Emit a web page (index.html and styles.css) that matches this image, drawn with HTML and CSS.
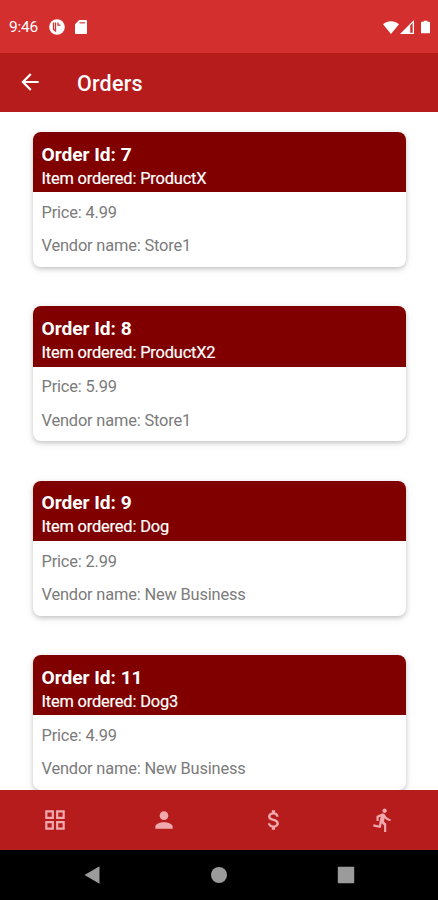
FILE: index.html
```html
<!DOCTYPE html>
<html lang="en">
<head>
<meta charset="utf-8">
<title>Orders</title>
<link rel="stylesheet" href="styles.css">
</head>
<body>
<div class="screen">
  <div class="status">
    <span class="clock">9:46</span>
    <svg class="app-dot" viewBox="0 0 16 16"><circle cx="8" cy="8" r="7.800" fill="#fff"/><path d="M4.500 3.500v7l2 1.500V3.500M9 3.500v2.700h2.500" fill="none" stroke="#d32f2f" stroke-width="1.300"/></svg>
    <svg class="sd" viewBox="0 0 12 14"><path d="M4.200 0H11a1 1 0 0 1 1 1v12a1 1 0 0 1-1 1H1a1 1 0 0 1-1-1V4.200z" fill="#fff"/><path d="M4.500 2.800h5.500" stroke="#d32f2f" stroke-width="1.500" opacity=".75"/></svg>
    <div class="signals">
      <svg class="wifi" viewBox="0 0 16 13"><path d="M0 3.200C4.500-.9 11.500-.9 16 3.200L8 13z" fill="#fff"/></svg>
      <svg class="cell" viewBox="0 0 14 14"><path d="M0 14L14 0v14z" fill="#fff"/><path d="M10.200 5.500L12.700 3v9.700h-2.500z" fill="#d32f2f"/></svg>
      <svg class="battery" viewBox="0 0 10 14"><path d="M3 0h4v1.300h2a1 1 0 0 1 1 1V13a1 1 0 0 1-1 1H1a1 1 0 0 1-1-1V2.300a1 1 0 0 1 1-1h2z" fill="#fff"/></svg>
    </div>
  </div>
  <header class="appbar">
    <svg class="back" viewBox="0 0 24 24"><path d="M20 11H7.830l5.590-5.590L12 4l-8 8 8 8 1.410-1.410L7.830 13H20z"/></svg>
    <h1>Orders</h1>
  </header>
  <main class="orders">
    <article class="card">
      <div class="card-head"><h2>Order Id: 7</h2><p>Item ordered: ProductX</p></div>
      <div class="card-body"><p>Price: 4.99</p><p>Vendor name: Store1</p></div>
    </article>
    <article class="card">
      <div class="card-head"><h2>Order Id: 8</h2><p>Item ordered: ProductX2</p></div>
      <div class="card-body"><p>Price: 5.99</p><p>Vendor name: Store1</p></div>
    </article>
    <article class="card">
      <div class="card-head"><h2>Order Id: 9</h2><p>Item ordered: Dog</p></div>
      <div class="card-body"><p>Price: 2.99</p><p>Vendor name: New Business</p></div>
    </article>
    <article class="card">
      <div class="card-head"><h2>Order Id: 11</h2><p>Item ordered: Dog3</p></div>
      <div class="card-body"><p>Price: 4.99</p><p>Vendor name: New Business</p></div>
    </article>
  </main>
  <nav class="tabs">
    <svg viewBox="0 0 24 24"><path fill-rule="evenodd" d="M3 3v8h8V3H3zm6 6H5V5h4v4zm-6 4v8h8v-8H3zm6 6H5v-4h4v4zm4-16v8h8V3h-8zm6 6h-4V5h4v4zm-6 4v8h8v-8h-8zm6 6h-4v-4h4v4z"/></svg>
    <svg viewBox="0 0 24 24"><path d="M12 12c2.210 0 4-1.790 4-4s-1.790-4-4-4-4 1.790-4 4 1.790 4 4 4zm0 2c-2.670 0-8 1.340-8 4v2h16v-2c0-2.660-5.330-4-8-4z"/></svg>
    <svg viewBox="0 0 24 24"><path d="M11.800 10.900c-2.270-.59-3-1.200-3-2.150 0-1.090 1.010-1.850 2.700-1.850 1.780 0 2.440.85 2.500 2.100h2.210c-.07-1.720-1.120-3.300-3.210-3.810V3h-3v2.160c-1.940.42-3.500 1.680-3.500 3.610 0 2.310 1.910 3.460 4.700 4.130 2.500.6 3 1.480 3 2.410 0 .69-.49 1.790-2.700 1.790-2.060 0-2.870-.92-2.980-2.100h-2.200c.12 2.190 1.760 3.420 3.680 3.830V21h3v-2.150c1.950-.37 3.500-1.500 3.500-3.550 0-2.840-2.430-3.810-4.700-4.400z"/></svg>
    <svg viewBox="0 0 24 24"><path d="M13.490 5.480c1.100 0 2-.9 2-2s-.9-2-2-2-2 .9-2 2 .9 2 2 2zm-3.600 13.900l1-4.400 2.100 2v6h2v-7.500l-2.100-2 .6-3c1.300 1.500 3.300 2.500 5.500 2.500v-2c-1.900 0-3.500-1-4.300-2.400l-1-1.600c-.4-.6-1-1-1.700-1-.3 0-.5.1-.8.1l-5.200 2.200v4.700h2v-3.400l1.800-.7-1.600 8.100-4.900-1-.4 2 7 1.400z"/></svg>
  </nav>
  <div class="system">
    <svg viewBox="0 0 18 18"><path d="M1.500 9L16.500.2v17.600z"/></svg>
    <svg viewBox="0 0 18 18"><circle cx="9" cy="9" r="8"/></svg>
    <svg viewBox="0 0 18 18"><rect x=".8" y=".8" width="16.400" height="16.400" rx=".8"/></svg>
  </div>
</div>
</body>
</html>
```
FILE: styles.css
```css
* { box-sizing: border-box; }
body, h1, h2, p { margin: 0; }
body { font-family: Roboto, "Liberation Sans", sans-serif; background: #fff; }
.screen { width: 438px; height: 900px; display: flex; flex-direction: column; overflow: hidden; }

.status { height: 53px; flex: none; background: #d32f2f; color: #fff; display: flex; align-items: center; padding: 1px 8px 0 9px; }
.clock { font-size: 15.500px; letter-spacing: -.2px; width: 40px; line-height: 18px; }
.app-dot { width: 16px; height: 16px; }
.sd { width: 12px; height: 14px; margin-left: 10px; }
.signals { margin-left: auto; display: flex; align-items: center; }
.wifi { width: 16px; height: 13px; }
.cell { width: 14px; height: 14px; margin-left: 1px; }
.battery { width: 9px; height: 14px; margin-left: 7px; }

.appbar { height: 59px; flex: none; background: #b71c1c; color: #fff; display: flex; align-items: center; padding: 0 17px; }
.back { width: 26px; height: 26px; fill: #fff; margin-top: -1px; }
h1 { font-size: 21.500px; font-weight: 500; margin-left: 34px; line-height: 28px; letter-spacing: .2px; padding-top: 2px; }

.orders { flex: 1; min-height: 0; overflow: hidden; padding: 20.200px 32px 0 33px; display: flex; flex-direction: column; gap: 39.300px; }
.card { height: 135px; flex: none; border-radius: 8px; background: #fff; overflow: hidden; box-shadow: 0 2px 4px rgba(0,0,0,.17), 0 2px 10px rgba(0,0,0,.09); }
.card-head { height: 60.200px; background: #800000; color: #fff; padding: 9.600px 8.500px 0; }
h2 { font-size: 19.200px; font-weight: 700; line-height: 25px; letter-spacing: -.05px; }
.card-head p { font-size: 16.400px; line-height: 24px; letter-spacing: -.17px; -webkit-text-stroke: .2px; }
.card-body { padding: 3.600px 8.500px 0; color: #7b7b7b; }
.card-body p { font-size: 16.400px; line-height: 33.500px; letter-spacing: -.17px; }

.tabs { height: 60px; flex: none; background: #b71c1c; display: grid; grid-template-columns: repeat(4, 1fr); place-items: center; }
.tabs svg { width: 26px; height: 26px; fill: #efa9ae; }

.system { height: 50px; flex: none; background: #000; display: flex; justify-content: space-between; align-items: center; padding: 0 83px 0 82.500px; }
.system svg { width: 18px; height: 18px; fill: #9b9b9b; }
```
